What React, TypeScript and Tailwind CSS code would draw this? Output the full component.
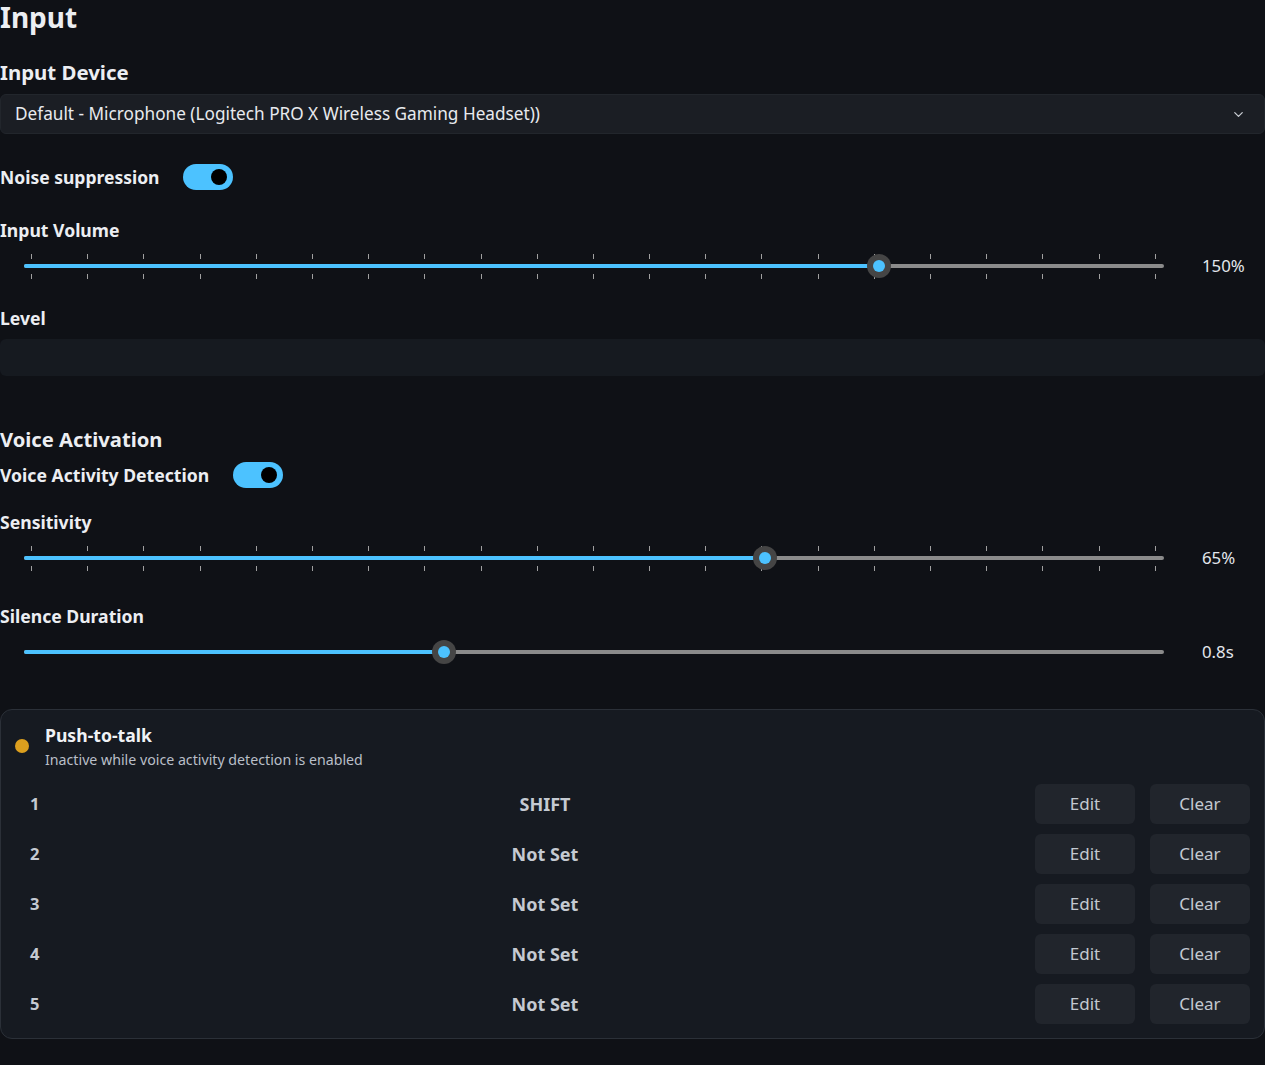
import React from "react";
import { ChevronDown } from "lucide-react";

const FONT = { fontFamily: '"Noto Sans", "Open Sans", Arial, sans-serif' };

function Toggle() {
  return (
    <div className="relative h-[26px] w-[50px] rounded-full bg-[#4cc2ff]">
      <div className="absolute right-[6px] top-[5px] h-[16px] w-[16px] rounded-full bg-black" />
    </div>
  );
}

function Ticks({ side }: { side: "top" | "bottom" }) {
  return (
    <div
      className={
        "absolute left-[7px] right-[8px] flex justify-between " +
        (side === "top" ? "top-[3px]" : "top-[23px]")
      }
    >
      {Array.from({ length: 21 }).map((_, i) => (
        <div key={i} className="h-[5px] w-px bg-[#a0a0a0]" />
      ))}
    </div>
  );
}

function Slider({ pct, value, ticks }: { pct: number; value: string; ticks?: boolean }) {
  return (
    <div className="flex h-[30px] items-center">
      <div className="relative ml-[24px] h-[30px] w-[1140px]">
        {ticks && <Ticks side="top" />}
        {ticks && <Ticks side="bottom" />}
        <div className="absolute left-0 right-0 top-[13px] h-[4px] rounded-full bg-[#8b8b8b]" />
        <div
          className="absolute left-0 top-[13px] h-[4px] rounded-full bg-[#4cc2ff]"
          style={{ width: `${pct * 100}%` }}
        />
        <div
          className="absolute top-[3px] flex h-[24px] w-[24px] -translate-x-1/2 items-center justify-center rounded-full bg-[#454545]"
          style={{ left: `${pct * 100}%` }}
        >
          <div className="h-[12px] w-[12px] rounded-full bg-[#4cc2ff]" />
        </div>
      </div>
      <div className="ml-[38px] w-[63px] text-[16.8px] text-[#e3e7ec]">{value}</div>
    </div>
  );
}

function Label({ children, className = "" }: { children: React.ReactNode; className?: string }) {
  return (
    <div className={"h-[24px] text-[17.6px] font-bold leading-[24px] text-[#eceef2] " + className}>
      {children}
    </div>
  );
}

const rows = [
  { n: "1", k: "SHIFT" },
  { n: "2", k: "Not Set" },
  { n: "3", k: "Not Set" },
  { n: "4", k: "Not Set" },
  { n: "5", k: "Not Set" },
];

export default function App() {
  return (
    <div className="min-h-[1065px] w-[1265px] bg-[#0f1116] text-[#eceef2]" style={FONT}>
      <div className="h-[34px] text-[28px] font-bold leading-[34px]">Input</div>
      <div className="mt-[24px] h-[28px] text-[20.4px] font-bold leading-[28px]">Input Device</div>
      <div className="mt-[8px] flex h-[40px] items-center justify-between rounded-[6px] border border-[#22262c] bg-[#1b1e24] pl-[14px] pr-[18px]">
        <span className="text-[17.2px] text-[#e8eaee]">
          Default - Microphone (Logitech PRO X Wireless Gaming Headset))
        </span>
        <ChevronDown size={15} strokeWidth={2} className="text-[#c8ccd2]" />
      </div>

      <div className="mt-[30px] flex h-[26px] items-center gap-[23px]">
        <span className="text-[17.5px] font-bold">Noise suppression</span>
        <Toggle />
      </div>

      <Label className="mt-[28px]">Input Volume</Label>
      <div className="mt-[9px]">
        <Slider pct={0.75} value="150%" ticks />
      </div>

      <Label className="mt-[25px]">Level</Label>
      <div className="mt-[9px] h-[37px] rounded-[6px] bg-[#161a20]" />

      <div className="mt-[49px] h-[28px] text-[20.2px] font-bold leading-[28px]">Voice Activation</div>
      <div className="mt-[9px] flex h-[26px] items-center gap-[24px]">
        <span className="text-[17.6px] font-bold">Voice Activity Detection</span>
        <Toggle />
      </div>

      <Label className="mt-[22px]">Sensitivity</Label>
      <div className="mt-[9px]">
        <Slider pct={0.65} value="65%" ticks />
      </div>

      <Label className="mt-[31px]">Silence Duration</Label>
      <div className="mt-[9px]">
        <Slider pct={0.7 / 1.9} value="0.8s" />
      </div>

      <div className="mt-[42px] h-[330px] rounded-[12px] border border-[#2b3038] bg-[#161a21] px-[14px] pt-[14px]">
        <div className="flex gap-[16px]">
          <div className="mt-[15px] h-[14px] w-[14px] rounded-full bg-[#dc9f1e]" />
          <div>
            <div className="h-[22px] text-[17.6px] font-bold leading-[22px] text-[#f0f2f5]">Push-to-talk</div>
            <div className="mt-[4px] h-[20px] text-[14.2px] leading-[20px] text-[#b9bfc8]">
              Inactive while voice activity detection is enabled
            </div>
          </div>
        </div>
        <div className="mt-[9px]">
          {rows.map((r) => (
            <div key={r.n} className="flex h-[50px] items-center pl-[15px]">
              <div className="w-[40px] text-[16.5px] font-bold text-[#c5cad2]">{r.n}</div>
              <div className="flex-1 text-center text-[18px] font-bold text-[#c5cad2]">{r.k}</div>
              <div className="ml-[15px] flex gap-[15px]">
                <div className="flex h-[40px] w-[100px] items-center justify-center rounded-[6px] bg-[#21252c] text-[17px] text-[#c3c9d1]">
                  Edit
                </div>
                <div className="flex h-[40px] w-[100px] items-center justify-center rounded-[6px] bg-[#21252c] text-[17px] text-[#c3c9d1]">
                  Clear
                </div>
              </div>
            </div>
          ))}
        </div>
      </div>
    </div>
  );
}
